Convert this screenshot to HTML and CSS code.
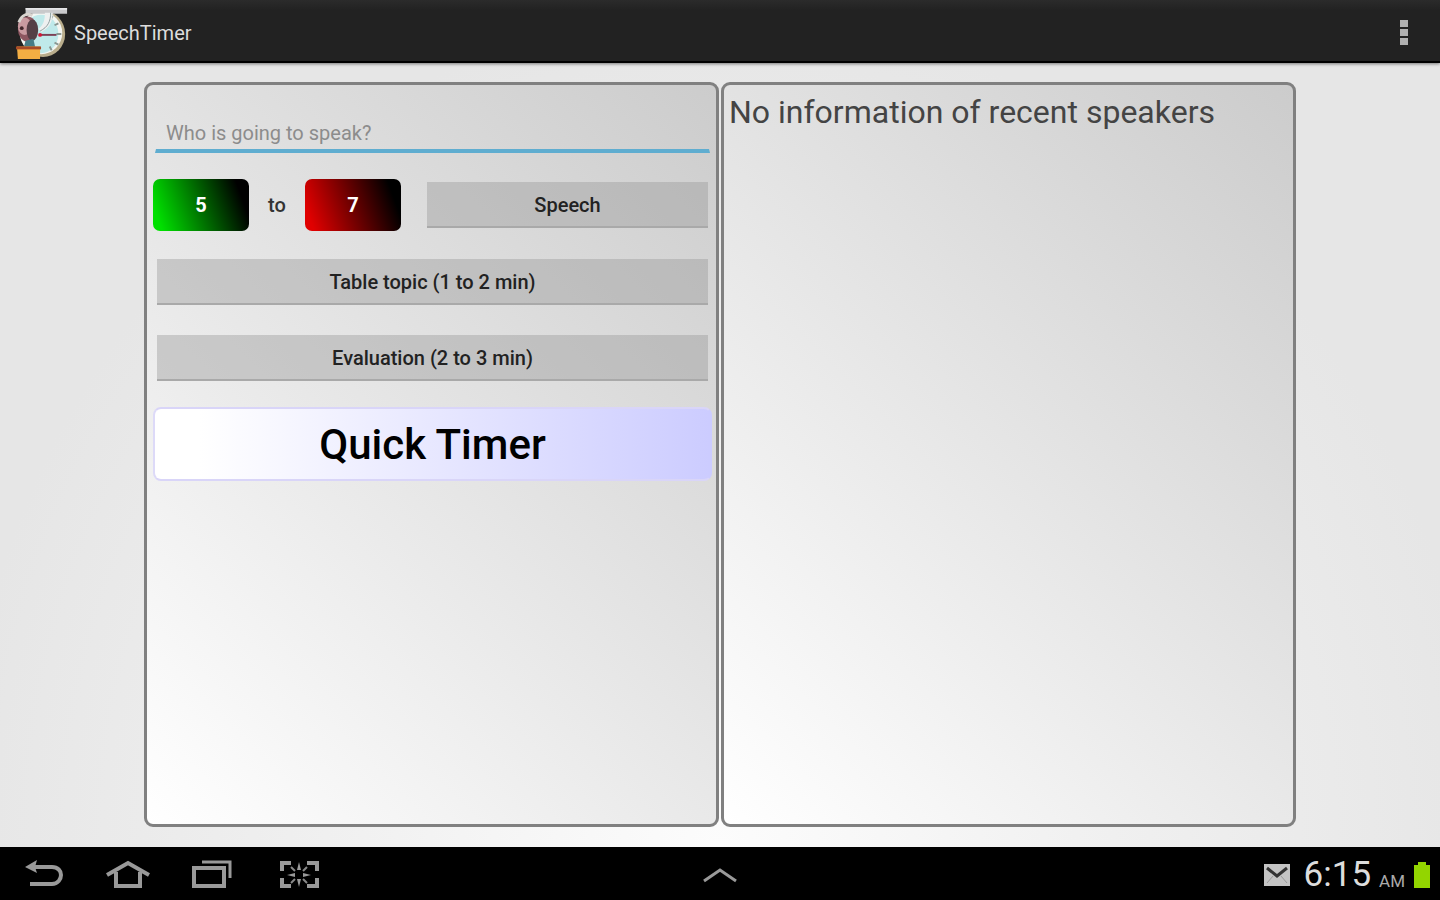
FILE: index.html
```html
<!DOCTYPE html>
<html lang="en">
<head>
    <meta charset="utf-8">
    <title>SpeechTimer</title>
    <meta name="viewport" content="width=device-width, initial-scale=1.0">
    <link rel="stylesheet" href="styles.css">
</head>
<body>
    <header class="action-bar">
        <svg class="logo" viewBox="0 0 56 56" aria-hidden="true">
            <ellipse cx="29" cy="30" rx="23" ry="24" fill="#b9ad8c"/>
            <ellipse cx="27" cy="29" rx="22" ry="22" fill="#f4f6f2"/>
            <ellipse cx="27" cy="30" rx="18" ry="20" fill="#bfe9ea"/>
            <path d="M45 19l-4 2M48 30h-5M45 41l-4-2M38 47l-2-4M39 11l-2 4" stroke="#8a9792" stroke-width="2"/>
            <path d="M11 3h43v6H11z" fill="#c9c9cb"/>
            <path d="M11 3h43v2H11z" fill="#e6e6e8"/>
            <path d="M31 8h8c0 9-3 16-12 20l-3-3c5-4 7-8 7-17z" fill="#eef0f0"/>
            <path d="M37 8c0 9-3 15-11 19" fill="none" stroke="#8b9c9c" stroke-width="1"/>
            <ellipse cx="13" cy="25" rx="10" ry="13" fill="#8d5660"/>
            <ellipse cx="10" cy="22" rx="7" ry="9" fill="#c99aa0"/>
            <ellipse cx="18" cy="26" rx="6" ry="11" fill="#553f46"/>
            <circle cx="7" cy="24" r="2" fill="#43272c"/>
            <path d="M4 18c3-8 9-10 14-7" fill="none" stroke="#d8d4cf" stroke-width="3"/>
            <path d="M11 37l8-2 2 9H9z" fill="#477c86"/>
            <path d="M26 31h17" stroke="#7c4055" stroke-width="2"/>
            <circle cx="26" cy="31" r="2" fill="#d41836"/>
            <path d="M2 43h24v13H3z" fill="#f3ae43"/>
            <path d="M1 43h26v3H1z" fill="#a84b27"/>
        </svg>
        <h1>SpeechTimer</h1>
        <button type="button" class="menu-button" aria-label="More options">
            <svg width="12" height="28" viewBox="0 0 12 28">
                <path d="M2 2h8v7H2zM2 11h8v7H2zM2 20h8v7H2z" fill="#b0b0b0"/>
            </svg>
        </button>
    </header>

    <main>
        <form class="panel timer-form">
            <input type="text" class="speaker" aria-label="Speaker" placeholder="Who is going to speak?">
            <div class="speech-row">
                <button type="button" class="minutes green">5</button>
                <span class="to">to</span>
                <button type="button" class="minutes red">7</button>
                <button type="button" class="preset speech">Speech</button>
            </div>
            <button type="button" class="preset">Table topic (1 to 2 min)</button>
            <button type="button" class="preset">Evaluation (2 to 3 min)</button>
            <button type="button" class="quick">Quick Timer</button>
        </form>

        <section class="panel recent">
            <p>No information of recent speakers</p>
        </section>
    </main>

    <footer class="system-bar">
        <nav class="nav-buttons">
            <button type="button" aria-label="Back">
                <svg width="44" height="32" viewBox="0 0 44 32">
                    <path d="M12 8h19c6 0 9 4 9 8s-3 9-9 9H9" fill="none" stroke="#999" stroke-width="4"/>
                    <path d="M4 8l12-7-2 7 2 6z" fill="#999"/>
                </svg>
            </button>
            <button type="button" aria-label="Home">
                <svg width="44" height="32" viewBox="0 0 44 32">
                    <path d="M1 16L22 4l21 12M10 13v14h24V13" fill="none" stroke="#999" stroke-width="4"/>
                </svg>
            </button>
            <button type="button" aria-label="Recent apps">
                <svg width="44" height="32" viewBox="0 0 44 32">
                    <path d="M3 9h30v18H3z" fill="none" stroke="#999" stroke-width="4"/>
                    <path d="M11 3h28v16" fill="none" stroke="#999" stroke-width="3"/>
                </svg>
            </button>
            <button type="button" aria-label="Screenshot">
                <svg width="44" height="32" viewBox="0 0 44 32">
                    <path d="M15 4H6v8M31 4h10v8M15 27H6v-8M31 27h10v-8" fill="none" stroke="#999" stroke-width="4"/>
                    <path d="M23 3l2 8h-4zM23 28l2-8h-4zM11 16l8-2v4zM35 16l-8-2v4z" fill="#999"/>
                    <path d="M15 8l4 4M31 8l-4 4M15 24l4-4M31 24l-4-4" stroke="#888" stroke-width="2"/>
                </svg>
            </button>
        </nav>
        <button type="button" class="expand" aria-label="Show apps">
            <svg width="36" height="16" viewBox="0 0 36 16">
                <path d="M2 14L18 3l16 11" fill="none" stroke="#999" stroke-width="3"/>
            </svg>
        </button>
        <div class="status">
            <svg width="26" height="22" viewBox="0 0 26 22" aria-label="New mail">
                <path d="M0 0h26v22H0z" fill="#c4c4c4"/>
                <path d="M3 4l10 8L23 4" fill="none" stroke="#333" stroke-width="3"/>
                <path d="M3 19l6-7M23 19l-6-7" fill="none" stroke="#999" stroke-width="1"/>
            </svg>
            <span class="clock">6:15</span>
            <span class="ampm">AM</span>
            <svg width="16" height="26" viewBox="0 0 16 26" aria-label="Battery full">
                <path d="M0 3h4V0h8v3h4v23H0z" fill="#93d500"/>
            </svg>
        </div>
    </footer>
</body>
</html>
```
FILE: styles.css
```css
* {
    box-sizing: border-box;
}

body {
    display: flex;
    flex-direction: column;
    min-height: 100vh;
    margin: 0;
    font-family: Roboto, sans-serif;
    color: #333;
    background-color: #e8e8e8;
}

button {
    padding: 0;
    border: none;
    background: none;
    font-family: inherit;
    cursor: pointer;
}

svg {
    display: block;
}

/* Top bar */
.action-bar {
    position: relative;
    display: flex;
    align-items: center;
    height: 63px;
    padding: 2px 28px 0 15px;
    background: linear-gradient(#2b2b2b, #222 10px);
    border-bottom: 2px solid #000;
    box-shadow: 0 1px 3px #777;
}

.logo {
    width: 54px;
    height: 56px;
    margin-right: 5px;
}

h1 {
    flex: 1;
    margin: 0;
    padding-top: 2px;
    font-size: 20px;
    font-weight: 400;
    line-height: 28px;
    color: #ddd;
}

.menu-button {
    padding: 2px;
}

/* Two panels */
main {
    flex: 1;
    display: grid;
    grid-template-columns: 1fr 1fr;
    gap: 2px;
    padding: 19px 10% 20px;
    background: radial-gradient(ellipse at 50% 100%, #fcfcfc 0%, #f1f1f1 35%, #e6e6e6 75%);
}

.panel {
    border: 3px solid #808080;
    border-radius: 9px;
    background: linear-gradient(45deg, #fff, #ccc);
}

.timer-form {
    display: flex;
    flex-direction: column;
    padding: 30px 4px 0 6px;
}

.speaker {
    height: 38px;
    margin: 0 2px 26px;
    padding: 2px 10px 0;
    border: 1px solid transparent;
    border-bottom: 4px solid #5fadd0;
    border-top: none;
    background: none;
    font-family: inherit;
    font-size: 20px;
    color: #333;
    outline: none;
}

.speaker::placeholder {
    color: #8c8c8c;
}

.speech-row {
    display: flex;
    align-items: center;
    margin-bottom: 28px;
}

.minutes {
    flex: 0 1 96px;
    height: 52px;
    border-radius: 7px;
    font-size: 20px;
    font-weight: 700;
    color: #fff;
}

.green {
    background: linear-gradient(70deg, #00e000 8%, #000 88%);
}

.red {
    background: linear-gradient(70deg, #e00000 8%, #000 88%);
}

.to {
    width: 56px;
    font-size: 20px;
    font-weight: 500;
    text-align: center;
}

.preset {
    height: 46px;
    margin: 0 4px 30px;
    padding-top: 2px;
    border-bottom: 2px solid #a9a9a9;
    background-color: rgba(150, 150, 150, 0.4);
    font-size: 20px;
    font-weight: 500;
    color: #222;
}

.speech {
    flex: 1;
    margin: 0 4px 0 26px;
}

.quick {
    height: 74px;
    margin-top: -4px;
    border: 2px solid;
    border-color: #d9d5f8 #ccf #d9d5f8 #dddaf8;
    border-radius: 8px;
    background: linear-gradient(to right, #fff 8%, #ccf);
    font-size: 42px;
    font-weight: 500;
    color: #000;
}

.recent p {
    margin: 0;
    padding: 7px 5px;
    font-size: 32px;
    line-height: 40px;
    color: #444;
}

/* Bottom bar */
.system-bar {
    display: grid;
    grid-template-columns: 1fr auto 1fr;
    align-items: center;
    height: 53px;
    padding: 2px 10px 0;
    background-color: #000;
}

.nav-buttons {
    display: flex;
    gap: 41px;
    padding-left: 11px;
}

.status {
    display: flex;
    align-items: center;
    justify-content: flex-end;
    color: #ddd;
}

.clock {
    margin: 0 8px 0 14px;
    font-size: 35px;
    line-height: 40px;
}

.ampm {
    margin-right: 9px;
    padding-top: 12px;
    font-size: 17px;
    line-height: 20px;
    color: #aaa;
}
```
